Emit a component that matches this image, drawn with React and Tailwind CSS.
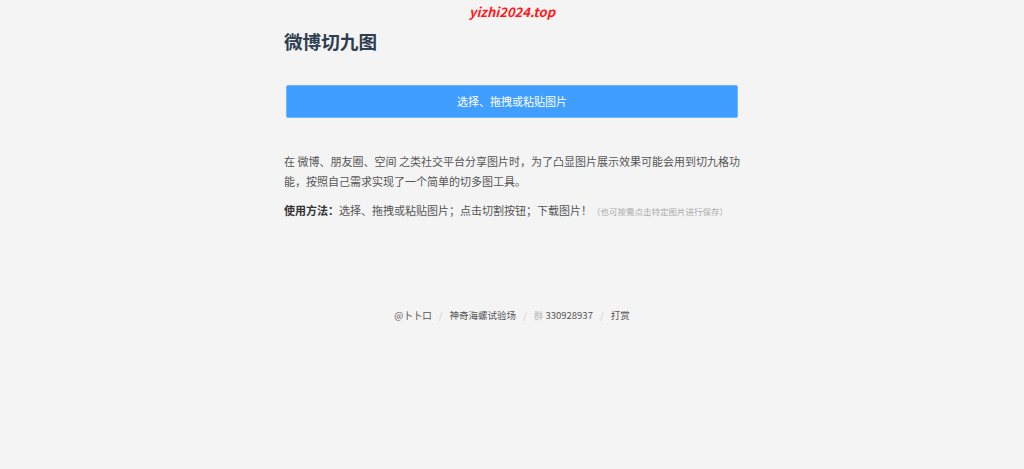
import React from "react";

const App = () => {
  return (
    <div
      className="min-h-[469px] bg-[#f4f4f4] text-[#555]"
      style={{ fontFamily: '"Noto Sans CJK SC", "Noto Sans", sans-serif' }}
    >
      {/* Watermark */}
      <div className="h-[24px] pt-[3px] text-center text-[13px] leading-[18px] font-bold italic text-[#ff1a1a]">
        yizhi2024.top
      </div>

      <div className="w-[456px] mx-auto">
        {/* Title */}
        <h1 className="mt-[3px] text-[18.6px] leading-[28px] font-bold text-[#2c3e50]">
          微博切九图
        </h1>

        {/* Upload button */}
        <div className="mt-[30px] mx-[2px] h-[33px] flex items-center justify-center rounded-[2px] bg-[#409eff] border border-[#6fb5ff] text-white text-[11px]">
          选择、拖拽或粘贴图片
        </div>

        {/* Description */}
        <p className="mt-[33px] text-[11px] leading-[20px] text-[#555]">
          在 微博、朋友圈、空间 之类社交平台分享图片时，为了凸显图片展示效果可能会用到切九格功能，按照自己需求实现了一个简单的切多图工具。
        </p>
        <p className="mt-[9px] text-[11px] leading-[20px] text-[#555] whitespace-nowrap">
          <span className="font-bold text-[#333]">使用方法：</span>
          选择、拖拽或粘贴图片；点击切割按钮；下载图片！
          <span className="text-[8.5px] text-[#aaa]">（也可按需点击特定图片进行保存）</span>
        </p>
      </div>

      {/* Footer */}
      <div className="mt-[86px] flex items-center justify-center text-[9.5px] leading-[16px] text-[#555]">
        <span>@卜卜口</span>
        <span className="mx-[7px] text-[#ccc]">/</span>
        <span>神奇海螺试验场</span>
        <span className="mx-[7px] text-[#ccc]">/</span>
        <span>
          <span className="text-[#bbb]">群</span> 330928937
        </span>
        <span className="mx-[7px] text-[#ccc]">/</span>
        <span>打赏</span>
      </div>
    </div>
  );
};

export default App;
